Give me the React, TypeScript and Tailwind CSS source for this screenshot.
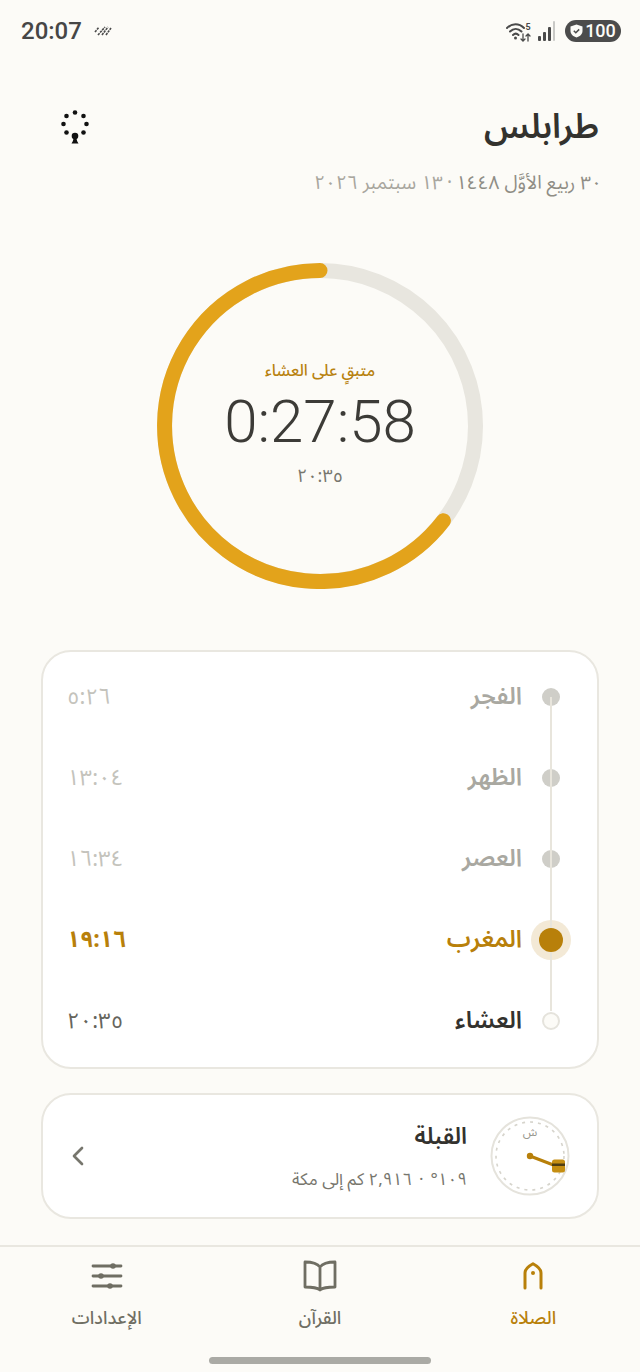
import React from "react";
import { ChevronLeft } from "lucide-react";

const arabicFont = "font-['Noto_Sans_Arabic','Noto_Naskh_Arabic','DejaVu_Sans',sans-serif]";

const prayers = [
  { name: "الفجر", time: "٥:٢٦", state: "past" },
  { name: "الظهر", time: "١٣:٠٤", state: "past" },
  { name: "العصر", time: "١٦:٣٤", state: "past" },
  { name: "المغرب", time: "١٩:١٦", state: "active" },
  { name: "العشاء", time: "٢٠:٣٥", state: "next" },
];

function StatusBar() {
  return (
    <div dir="ltr" className="flex h-[62px] items-center justify-between pl-[21px] pr-[19px]">
      <div className="flex items-center gap-[12px]">
        <span className="font-['Roboto',sans-serif] text-[24px] font-medium leading-none text-[#464646]">20:07</span>
        <svg width="18" height="12" viewBox="0 0 18 12" stroke="#4a4a4a" strokeWidth="1.6" strokeDasharray="2.4 0.8">
          <path d="M1 7 5 2M4 10l7-8M8 10l6-8M12 10l5-7" />
        </svg>
      </div>
      <div className="flex items-center">
        <svg width="26" height="24" viewBox="0 0 26 24" fill="none" stroke="#4a4a4a" strokeWidth="2" strokeLinecap="round">
          <path d="M1 9c5-5 12-5 17 0M4 12.5c3.500-3.500 8-3.500 11.500 0M7 16c2-2 3.500-2 5.500 0" />
          <circle cx="9.500" cy="19" r="1.500" fill="#4a4a4a" stroke="none" />
          <path d="M17 15v7M15 20l2 2 2-2M22 22v-7M20 17l2-2 2 2" strokeWidth="1.300" />
          <text x="19.500" y="11" fontSize="9" fontWeight="700" fill="#4a4a4a" stroke="none" fontFamily="Roboto">5</text>
        </svg>
        <svg className="ml-[6px]" width="18" height="20" viewBox="0 0 18 20" fill="#4a4a4a">
          <rect x="0" y="15" width="3" height="5" rx="1" />
          <rect x="5" y="11" width="3" height="9" rx="1" />
          <rect x="10" y="6" width="3" height="14" rx="1" />
          <rect x="15" y="0" width="2" height="20" rx="1" fill="#c9c9c6" />
        </svg>
        <div className="ml-[9px] flex h-[22px] w-[56px] items-center justify-center gap-[2px] rounded-full bg-[#4c4c4c]">
          <svg width="13" height="14" viewBox="0 0 13 14" fill="#fcfbf7">
            <path d="M6.500 0.500 12.500 2.500V7c0 3.500-3 5.500-6 6.500C3.500 12.500 0.500 10.500 0.500 7V2.500Z" />
            <path d="m3.800 6.800 2 2 3.400-3.400" fill="none" stroke="#4c4c4c" strokeWidth="1.500" />
          </svg>
          <span className="font-['Roboto',sans-serif] text-[18px] font-medium leading-none text-[#fcfbf7]">100</span>
        </div>
      </div>
    </div>
  );
}

function BeadsIcon() {
  return (
    <svg width="28" height="34" viewBox="0 0 28 34" fill="#111">
      <circle cx="14" cy="2.500" r="2.300" />
      <circle cx="5.500" cy="6" r="2.300" />
      <circle cx="22.500" cy="6" r="2.300" />
      <circle cx="2.500" cy="14" r="2.300" />
      <circle cx="25.500" cy="14" r="2.300" />
      <circle cx="5.500" cy="22.500" r="2.300" />
      <circle cx="22.500" cy="22.500" r="2.300" />
      <circle cx="14" cy="26" r="3.300" />
      <path d="M10.500 33.500c1-1.500 1.800-3 2-5.500h3c.2 2.500 1 4 2 5.500Z" />
    </svg>
  );
}

function CountdownRing() {
  return (
    <div className="relative mx-auto mt-[66px] h-[326px] w-[326px]">
      <svg width="326" height="326" viewBox="0 0 326 326" fill="none" strokeWidth="15">
        <circle cx="163" cy="163" r="155.500" stroke="#e8e6df" />
        <path d="M163 7.500A155.500 155.500 0 1 0 286.400 257.700" stroke="#e3a31b" strokeLinecap="round" />
      </svg>
      <div className="absolute inset-0 flex flex-col items-center">
        <div className={`mt-[96px] text-[16px] font-medium leading-[24px] text-[#b8820f] ${arabicFont}`}>متبقٍ على العشاء</div>
        <div dir="ltr" className="mt-[8px] font-['Roboto',sans-serif] text-[60px] font-light leading-[62px] text-[#3c3b37]">0:27:58</div>
        <div dir="ltr" className={`mt-[10px] text-[18px] leading-[26px] text-[#77766d] ${arabicFont}`}>٢٠:٣٥</div>
      </div>
    </div>
  );
}

function PrayerRow({ name, time, state }: { name: string; time: string; state: string }) {
  const nameColor =
    state === "past" ? "text-[#a9a8a1]" : state === "active" ? "text-[#b8800a]" : "text-[#33322e]";
  const timeColor =
    state === "past"
      ? "text-[22px] text-[#c4c3bc] font-normal"
      : state === "active"
        ? "text-[23px] text-[#b8800a] font-bold tracking-[2.500px]"
        : "text-[22px] text-[#66655d] font-normal";

  return (
    <div className="flex h-[81px] items-center">
      <div className="flex w-[40px] shrink-0 items-center justify-center">
        {state === "past" && <div className="h-[18px] w-[18px] rounded-full bg-[#cfcec8]" />}
        {state === "active" && (
          <div className="flex h-[40px] w-[40px] items-center justify-center rounded-full bg-[#f3e9d6]">
            <div className="relative z-10 h-[24px] w-[24px] rounded-full bg-[#b8800a]" />
          </div>
        )}
        {state === "next" && (
          <div className="relative z-10 h-[18px] w-[18px] rounded-full border-2 border-[#e5e3dc] bg-[#fcfbf7]" />
        )}
      </div>
      <div className={`mr-[9px] flex-1 text-[24px] font-semibold leading-none ${nameColor} ${arabicFont}`}>{name}</div>
      <div dir="ltr" className={`leading-none ${timeColor} ${arabicFont}`}>{time}</div>
    </div>
  );
}

function QiblaDial() {
  return (
    <svg width="80" height="80" viewBox="0 0 80 80" fill="none">
      <circle cx="40" cy="40" r="38.500" stroke="#e5e3dc" strokeWidth="2" />
      <circle cx="40" cy="40" r="34" stroke="#d6d4cc" strokeWidth="1.600" strokeDasharray="3 5" />
      <text x="40" y="20" textAnchor="middle" fontSize="12" fill="#99988f" fontFamily="Noto Sans Arabic, DejaVu Sans, sans-serif">ش</text>
      <path d="M40 40 66 50" stroke="#b8800a" strokeWidth="3" strokeLinecap="round" />
      <circle cx="40" cy="40" r="3.200" fill="#b8800a" />
      <rect x="62" y="43.500" width="13" height="13" rx="2.500" fill="#c58e12" />
      <rect x="62" y="47.500" width="13" height="2.500" fill="#4f3d12" />
    </svg>
  );
}

function MihrabIcon() {
  return (
    <svg width="20" height="28" viewBox="0 0 20 28" fill="none" stroke="#b8800a" strokeWidth="3" strokeLinecap="round" strokeLinejoin="round">
      <path d="M2 26V11C2 7 6 4 10 1.800c4 2.200 8 5.200 8 9.200v15" />
      <circle cx="10" cy="11" r="2" fill="#b8800a" stroke="none" />
    </svg>
  );
}

function BookIcon() {
  return (
    <svg width="34" height="32" viewBox="0 0 34 32" fill="none" stroke="#6f6e63" strokeWidth="2.800" strokeLinejoin="round" strokeLinecap="round">
      <path d="M17 7C14 3 9 2 2 2v25c7 0 12 .5 15 3 3-2.500 8-3 15-3V2c-7 0-12 1-15 5Zm0 0v23" />
    </svg>
  );
}

function SlidersIcon() {
  return (
    <svg width="32" height="32" viewBox="0 0 32 32" fill="#6f6e63" stroke="#6f6e63" strokeLinecap="round">
      <path d="M2 6h28M2 16h28M2 26h28" strokeWidth="2.800" fill="none" />
      <circle cx="22" cy="6" r="2.800" stroke="none" />
      <circle cx="10" cy="16" r="2.800" stroke="none" />
      <circle cx="19" cy="26" r="2.800" stroke="none" />
    </svg>
  );
}

function TabItem({ label, active, children }: { label: string; active?: boolean; children: React.ReactNode }) {
  return (
    <div className="flex flex-col items-center">
      <div className="flex h-[32px] items-center justify-center">{children}</div>
      <div className={`mt-[14px] text-[18px] font-medium leading-[24px] ${active ? "text-[#b8800a]" : "text-[#6f6e63]"} ${arabicFont}`}>{label}</div>
    </div>
  );
}

export default function App() {
  return (
    <div dir="rtl" className={`flex h-[1372px] w-[640px] flex-col bg-[#fcfbf7] ${arabicFont}`}>
      <StatusBar />

      <header className="flex items-start justify-between pl-[61px] pr-[41px] pt-[42px]">
        <div className="flex-1">
          <h1 className="text-[34px] font-semibold leading-[46px] text-[#33322e]">طرابلس</h1>
          <div className="-mr-[3px] mt-[19px] text-[19px] leading-[28px]">
            <span className="text-[#8f8d85]">٣٠ ربيع الأوَّل ١٤٤٨</span>
            <span className="mx-[4px] text-[#a8a69e]">·</span>
            <span className="text-[#a8a69e]">١٣ سبتمبر ٢٠٢٦</span>
          </div>
        </div>
        <div className="mt-[6px]">
          <BeadsIcon />
        </div>
      </header>

      <CountdownRing />

      <section className="relative mx-[41px] mt-[61px] h-[419px] rounded-[30px] border-2 border-[#e9e7e0] bg-white pl-[24px] pr-[26px] pt-[4px]">
        <div className="absolute bottom-[56px] right-[45px] top-[45px] w-[2px] bg-[#e8e5dc]" />
        {prayers.map((p) => (
          <PrayerRow key={p.name} name={p.name} time={p.time} state={p.state} />
        ))}
      </section>

      <section className="mx-[41px] mt-[24px] flex h-[126px] items-center rounded-[30px] border-2 border-[#e9e7e0] bg-white pl-[19px] pr-[27px]">
        <QiblaDial />
        <div className="mr-[23px] flex-1">
          <div className="text-[23px] font-semibold leading-[34px] text-[#33322e]">القبلة</div>
          <div className="mt-[13px] text-[17px] leading-[26px] text-[#77766d]">
            <span>١٠٩°</span>
            <span className="mx-[7px]">·</span>
            <span>٢,٩١٦ كم إلى مكة</span>
          </div>
        </div>
        <ChevronLeft size={32} strokeWidth={2} className="text-[#77766d]" />
      </section>

      <nav className="mt-[26px] grid grid-cols-3 border-t-2 border-[#e9e7e0] pt-[13px]">
        <TabItem label="الصلاة" active>
          <MihrabIcon />
        </TabItem>
        <TabItem label="القرآن">
          <BookIcon />
        </TabItem>
        <TabItem label="الإعدادات">
          <SlidersIcon />
        </TabItem>
      </nav>

      <div className="mx-auto mt-[27px] h-[7px] w-[222px] rounded-full bg-[#aaaaa5]" />
    </div>
  );
}
